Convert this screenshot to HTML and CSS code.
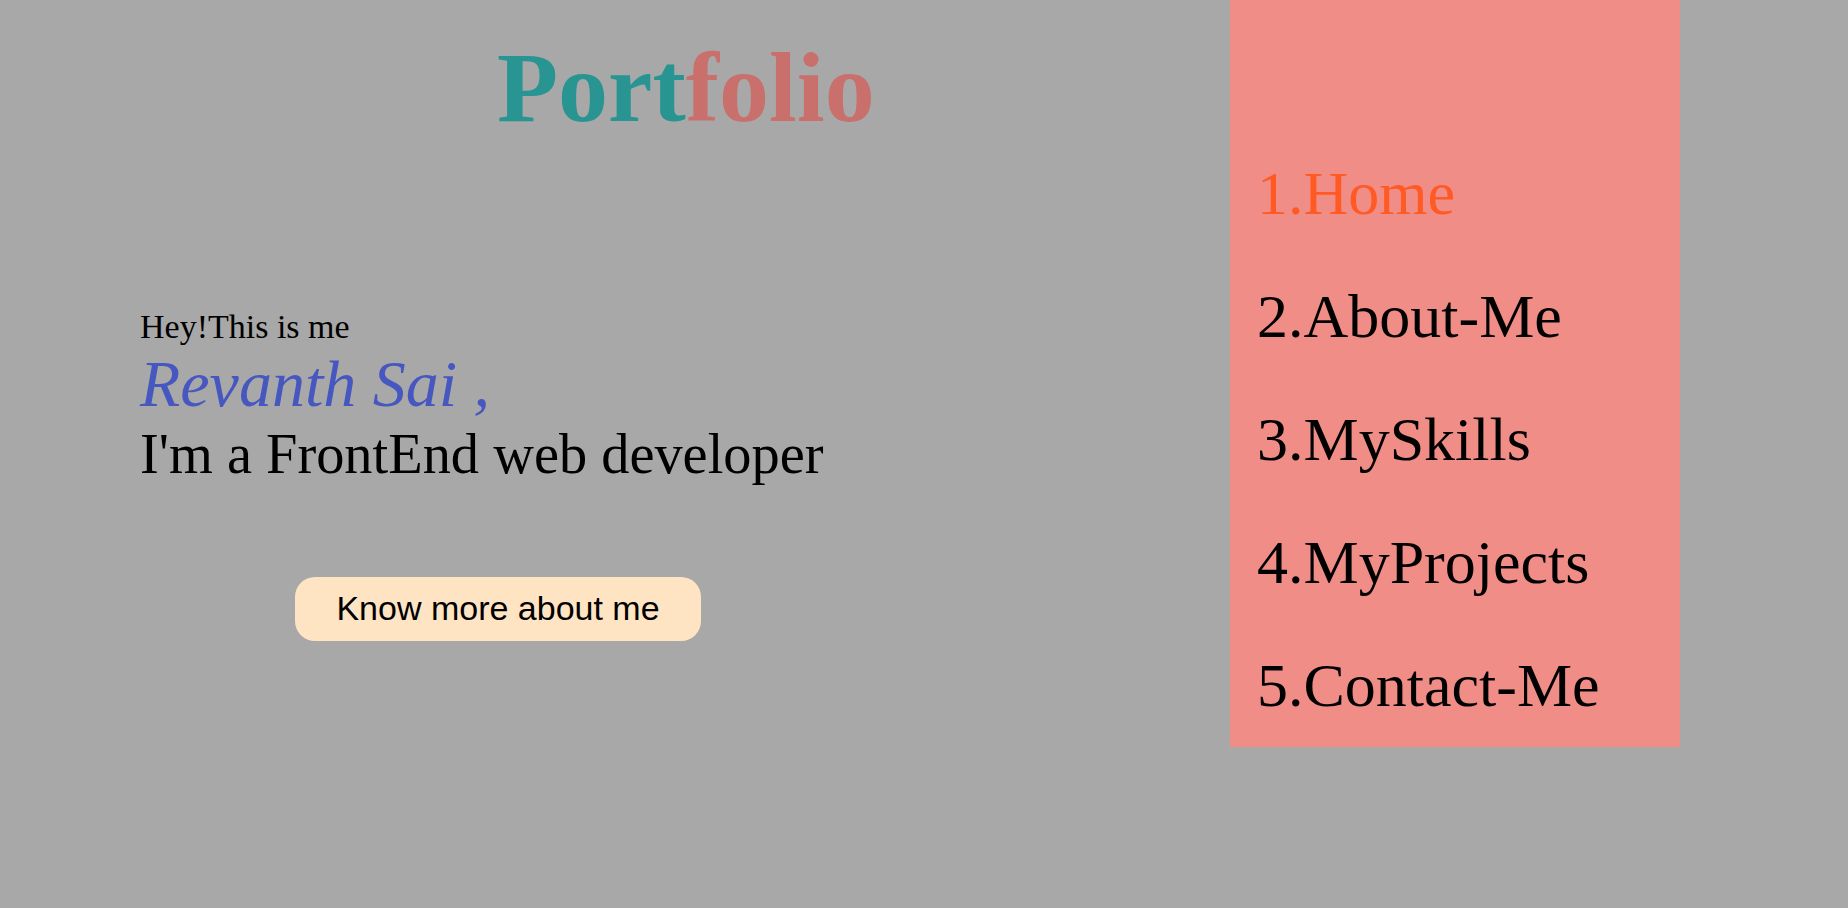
FILE: index.html
```html
<!DOCTYPE html>
<html lang="en">
<head>
<meta charset="utf-8">
<title>Portfolio</title>
<link rel="stylesheet" href="styles.css">
</head>
<body>
<div class="page">
  <main class="main">
    <h1 class="title"><span class="title-a">Port</span><span class="title-b">folio</span></h1>
    <section class="intro">
      <p class="hey">Hey!This is me</p>
      <p class="name">Revanth Sai ,</p>
      <p class="role">I'm a FrontEnd web developer</p>
    </section>
    <button class="more">Know more about me</button>
  </main>
  <nav class="sidebar">
    <ul class="menu">
      <li class="item active">1.Home</li>
      <li class="item">2.About-Me</li>
      <li class="item">3.MySkills</li>
      <li class="item">4.MyProjects</li>
      <li class="item">5.Contact-Me</li>
    </ul>
  </nav>
</div>
</body>
</html>
```

FILE: styles.css
```css
html, body {
  margin: 0;
  padding: 0;
}
body {
  background: #a8a8a8;
  font-family: "Liberation Serif", "Times New Roman", serif;
  color: #000;
  height: 908px;
  overflow: hidden;
}
.page {
  display: flex;
  align-items: flex-start;
}
.main {
  width: 1230px;
  display: flex;
  flex-direction: column;
  align-items: flex-start;
}
.title {
  margin: 30px 0 0 497px;
  font-size: 100px;
  line-height: 1.15;
  font-weight: bold;
}
.title-a { color: #289592; }
.title-b { color: #c9706d; }
.intro {
  margin: 162px 0 0 140px;
}
.intro p {
  margin: 0;
  line-height: 1.15;
}
.hey {
  font-size: 34px;
}
.name {
  font-size: 66px;
  font-style: italic;
  color: #4757c0;
}
.role {
  font-size: 56.4px;
}
.more {
  margin: 90px 0 0 295px;
  width: 406px;
  height: 64px;
  padding: 0;
  border: none;
  border-radius: 20px;
  background: #ffe4c4;
  font-family: "Liberation Sans", Arial, sans-serif;
  font-size: 34px;
  color: #000;
}
.sidebar {
  width: 450px;
  background: #f08d87;
  box-sizing: border-box;
  padding: 132px 0 0 27px;
}
.menu {
  list-style: none;
  margin: 0;
  padding: 0;
}
.item {
  font-size: 62px;
  line-height: 123px;
  height: 123px;
}
.active {
  color: #ff5a24;
}
```
